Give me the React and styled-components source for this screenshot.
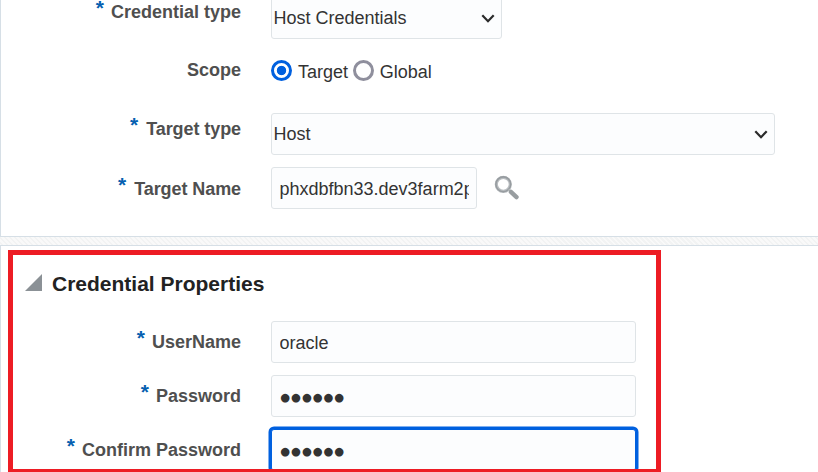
import React from "react";
import styled, { createGlobalStyle } from "styled-components";

const GlobalStyle = createGlobalStyle`
  *, *::before, *::after { box-sizing: border-box; }
  body {
    margin: 0;
    overflow: hidden;
    background: #fff;
    font-family: "Liberation Sans", Arial, sans-serif;
    font-size: 18px;
    line-height: 20px;
    color: #333;
  }
`;

const Page = styled.main`
  position: relative;
  display: flex;
  flex-direction: column;
  gap: 8px;
  width: 818px;
  height: 472px;
  overflow: hidden;
  background: repeating-linear-gradient(45deg, #f9f9f9 0 2px, #f2f3f3 2px 3.54px);
`;

const Panel = styled.section`
  flex: none;
  display: flex;
  flex-direction: column;
  gap: 12px;
  background: #fff;
  border-left: 1px solid #d6dfe6;
`;

const TargetPanel = styled(Panel)`
  height: 240px;
  margin-top: -3px;
  border-bottom: 1px solid #d6dfe6;
`;

const PropertiesPanel = styled(Panel)`
  height: 240px;
  border-top: 1px solid #d6dfe6;
`;

const Row = styled.div`
  display: grid;
  grid-template-columns: 240px 1fr;
  column-gap: 30px;
  height: ${(p) => p.$height || 42}px;
`;

const Label = styled.label`
  display: flex;
  justify-content: flex-end;
  align-items: flex-start;
  gap: ${(p) => (p.$tight ? 8 : 7)}px;
  padding-top: ${(p) => p.$top}px;
  font-weight: 700;
  letter-spacing: ${(p) => (p.$tight ? "-0.08px" : "normal")};
  color: #4f4f4f;
  white-space: nowrap;
`;

const Required = styled.span`
  margin-top: -4px;
  font-size: 21px;
  color: #0560b0;
`;

const Fields = styled.div`
  display: flex;
  align-items: flex-start;
`;

const Box = styled.div`
  display: flex;
  align-items: center;
  flex: none;
  width: ${(p) => p.$width}px;
  height: 42px;
  border: 1px solid #dfe4e7;
  border-radius: 3px;
  background: #fcfdfe;
  white-space: nowrap;
`;

const SelectBox = styled(Box)`
  justify-content: space-between;
  padding: 0 6.5px 0 1.5px;
`;

const InputBox = styled(Box)`
  padding: 2px 7px 0 7.5px;
  box-shadow: ${(p) => (p.$focused ? "0 0 0 2.5px #0060df" : "none")};
  border-color: ${(p) => (p.$focused ? "#0060df" : "#dfe4e7")};
`;

const Value = styled.span`
  overflow: hidden;
`;

const Mask = styled.span`
  margin: 1px 0 0 0.8px;
  font-family: "DejaVu Sans", sans-serif;
  font-size: 11.3px;
  letter-spacing: 0.95px;
`;

const Choices = styled(Fields)`
  padding-top: 9px;
  gap: 4.8px;
`;

const Choice = styled.label`
  display: flex;
  gap: 6px;
`;

const RadioMark = styled.span`
  width: 21px;
  height: 21px;
  flex: none;
  border: 3px solid ${(p) => (p.$checked ? "#0060df" : "#8f8f9d")};
  border-radius: 50%;
  background: ${(p) =>
    p.$checked ? "radial-gradient(circle, #0060df 4.3px, #fff 5.1px)" : "#fff"};
`;

const ChoiceText = styled.span`
  padding-top: 2px;
`;

const SearchIcon = styled.svg`
  margin: 8px 0 0 17px;
`;

const Heading = styled.h2`
  display: flex;
  align-items: flex-start;
  gap: 10px;
  height: 63px;
  margin: 0;
  padding: 26px 0 0 24px;
  font-size: 21px;
  line-height: 24px;
  color: #222;
`;

const Disclosure = styled.svg`
  margin-top: 2px;
`;

const Highlight = styled.div`
  position: absolute;
  left: 8px;
  top: 250px;
  width: 653px;
  height: 224px;
  border: 5px solid #ed1c24;
`;

function Field({ label, required, top, height, tight, children }) {
  return (
    <Row $height={height}>
      <Label $top={top} $tight={tight}>
        {required && <Required>*</Required>}
        {label}
      </Label>
      {children}
    </Row>
  );
}

function Select({ width, value }) {
  return (
    <SelectBox $width={width}>
      <Value>{value}</Value>
      <svg width="14" height="10" viewBox="0 0 14 10" fill="none">
        <path d="M1.3 2.3 7 8.2l5.7-5.9" stroke="#2b2b2b" strokeWidth="2.2" />
      </svg>
    </SelectBox>
  );
}

function Radio({ label, checked }) {
  return (
    <Choice>
      <RadioMark $checked={checked} />
      <ChoiceText>{label}</ChoiceText>
    </Choice>
  );
}

export default function App() {
  return (
    <>
      <GlobalStyle />
      <Page>
        <TargetPanel>
          <Field label="Credential type" required top={5}>
            <Fields><Select width={231} value="Host Credentials" /></Fields>
          </Field>
          <Field label="Scope" top={9} height={50}>
            <Choices>
              <Radio label="Target" checked />
              <Radio label="Global" />
            </Choices>
          </Field>
          <Field label="Target type" required tight top={6}>
            <Fields><Select width={504} value="Host" /></Fields>
          </Field>
          <Field label="Target Name" required tight top={12}>
            <Fields>
              <InputBox $width={206}><Value>phxdbfbn33.dev3farm2p</Value></InputBox>
              <SearchIcon width="26" height="26" viewBox="0 0 26 26" fill="none">
                <circle cx="9.3" cy="9.3" r="7" stroke="#b9bdc0" strokeWidth="3.2" />
                <circle cx="9.3" cy="9.3" r="7.4" stroke="#979ca0" strokeWidth="1.6" />
                <path d="m14.7 14.4 2.2 2.2" stroke="#b8bcbe" strokeWidth="2" />
                <path d="m16.9 16.9 5.6 5.2" stroke="#989da0" strokeWidth="4.4" strokeLinecap="round" />
              </SearchIcon>
            </Fields>
          </Field>
        </TargetPanel>
        <PropertiesPanel>
          <Heading>
            <Disclosure width="17" height="17" viewBox="0 0 17 17">
              <path d="M0 17 17 0v17z" fill="#8b9196" />
            </Disclosure>
            Credential Properties
          </Heading>
          <Field label="UserName" required top={11}>
            <Fields><InputBox $width={365}><Value>oracle</Value></InputBox></Fields>
          </Field>
          <Field label="Password" required top={11}>
            <Fields><InputBox $width={365}><Mask>●●●●●●</Mask></InputBox></Fields>
          </Field>
          <Field label="Confirm Password" required top={11}>
            <Fields><InputBox $width={365} $focused><Mask>●●●●●●</Mask></InputBox></Fields>
          </Field>
        </PropertiesPanel>
        <Highlight />
      </Page>
    </>
  );
}
